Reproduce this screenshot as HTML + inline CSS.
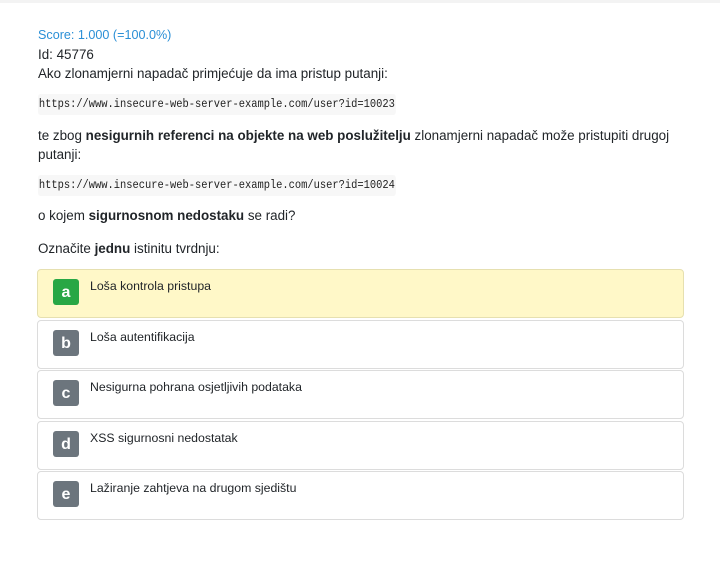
<!DOCTYPE html>
<html><head><meta charset="utf-8"><style>
body{margin:0;background:#fff;font-family:"Liberation Sans",sans-serif;font-size:13.4px;color:#212529;width:720px;height:562px;overflow:hidden;position:relative}
.top{position:absolute;top:0;left:0;right:0;height:3px;background:#f3f3f3}
.t{position:absolute;left:38px;white-space:nowrap;line-height:19px}
.code{display:inline-block;transform:scaleX(0.84);transform-origin:left;font-family:"Liberation Mono",monospace;font-size:12.4px;background:#f7f7f7;border-radius:3px;padding:1px 1px;color:#222}
b{font-weight:bold}
.opt{position:absolute;left:37px;width:645px;height:47px;border:1px solid #dcdcdc;border-radius:4px;background:#fff}
.opt.sel{background:#fff8c8;border-color:#e6e0b0}
.bd{position:absolute;left:15px;top:9px;width:26px;height:26px;border-radius:3px;background:#6c757d;color:#fff;font-weight:bold;font-size:16px;text-align:center;line-height:27px}
.sel .bd{background:#28a745}
.ot{position:absolute;left:52px;top:9px;font-size:12.3px}
</style></head><body>
<div class="top"></div>
<div class="t" style="top:26px;color:#2a8fd6;font-size:12.6px">Score: 1.000 (=100.0%)</div>
<div class="t" style="top:45px">Id: 45776</div>
<div class="t" style="top:64px">Ako zlonamjerni napadač primjećuje da ima pristup putanji:</div>
<div class="t" style="top:93px"><span class="code">https://www.insecure-web-server-example.com/user?id=10023</span></div>
<div class="t" style="top:126px">te zbog <b>nesigurnih referenci na objekte na web poslužitelju</b> zlonamjerni napadač može pristupiti drugoj</div>
<div class="t" style="top:145px">putanji:</div>
<div class="t" style="top:174px"><span class="code">https://www.insecure-web-server-example.com/user?id=10024</span></div>
<div class="t" style="top:206px">o kojem <b>sigurnosnom nedostaku</b> se radi?</div>
<div class="t" style="top:239px">Označite <b>jednu</b> istinitu tvrdnju:</div>
<div class="opt sel" style="top:269px"><div class="bd">a</div><div class="ot">Loša kontrola pristupa</div></div>
<div class="opt" style="top:320px"><div class="bd">b</div><div class="ot">Loša autentifikacija</div></div>
<div class="opt" style="top:370px"><div class="bd">c</div><div class="ot">Nesigurna pohrana osjetljivih podataka</div></div>
<div class="opt" style="top:421px"><div class="bd">d</div><div class="ot">XSS sigurnosni nedostatak</div></div>
<div class="opt" style="top:471px"><div class="bd">e</div><div class="ot">Lažiranje zahtjeva na drugom sjedištu</div></div>
</body></html>
